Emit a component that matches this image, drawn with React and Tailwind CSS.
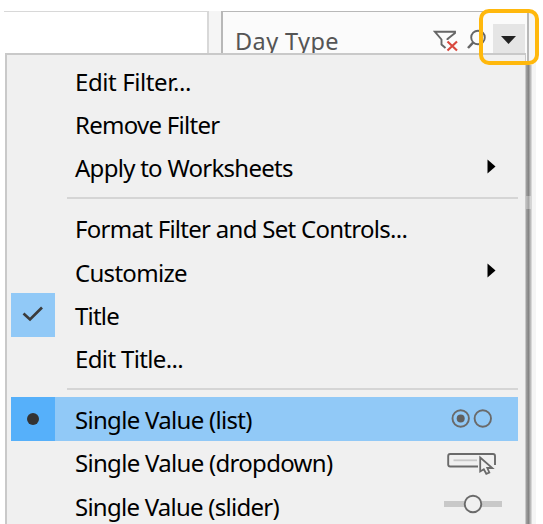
import React from "react";

function Arrow() {
  return (
    <svg width="9" height="15" viewBox="0 0 9 15" className="mr-[22px] -mt-[2px]">
      <path d="M.5 .5 8.5 7.5 .5 14.5Z" fill="#000" />
    </svg>
  );
}

function Check() {
  return (
    <svg width="22" height="16" viewBox="0 0 22 16" className="-mt-0.5" fill="none">
      <path d="M1.5 7.5 8 13.5 20 1.5" stroke="#3b3b3b" strokeWidth="2.7" />
    </svg>
  );
}

function RadioIcon() {
  return (
    <svg width="42" height="19" viewBox="0 0 42 19" className="-mt-0.5 mr-[25px]" fill="none" stroke="#6a6a6a" strokeWidth="1.9">
      <circle cx="9.7" cy="9.5" r="8.2" />
      <circle cx="9.7" cy="9.5" r="4" fill="#606060" stroke="none" />
      <circle cx="31.8" cy="9.5" r="8.2" />
    </svg>
  );
}

function DropdownIcon() {
  return (
    <svg width="50" height="24" viewBox="0 0 50 24" className="mr-[21px] mt-1" fill="none" stroke="#6a6a6a" strokeWidth="1.9">
      <path d="M31 14.5H3.2Q1.2 14.5 1.2 12.5V4Q1.2 2 3.2 2H46Q48 2 48 4V13" />
      <path d="M6.5 8.3H30" stroke="#c8c8c8" strokeWidth="1.8" />
      <path d="M33.2 5.5V19.5L36.8 17.3 39.3 21.8 42.3 20.5 40.3 16H45.3Z" strokeWidth="1.8" />
    </svg>
  );
}

function SliderIcon() {
  return (
    <svg width="58" height="20" viewBox="0 0 58 20" className="mr-4 -mt-[3px]">
      <path d="M0 10H58" stroke="#c8c8c8" strokeWidth="6" />
      <circle cx="29" cy="10" r="8.3" fill="#f0f0f0" stroke="#6a6a6a" strokeWidth="1.9" />
    </svg>
  );
}

function Item({ label, mark, icon, active, tracking }) {
  return (
    <div className={`flex h-[43.35px] shrink-0 items-center ${active ? "bg-[#91c9f7]" : ""}`}>
      <div
        className={`flex h-full w-11 shrink-0 items-center justify-center ${
          active ? "bg-[#56b0fa]" : mark ? "bg-[#91c9f7]" : ""
        }`}
      >
        {mark}
      </div>
      <span className={`ml-5 flex-1 whitespace-nowrap pt-px leading-[43px] ${tracking}`}>{label}</span>
      {icon}
    </div>
  );
}

function Separator() {
  return (
    <div className="flex h-[17.5px] shrink-0 items-center pl-14">
      <div className="h-0.5 w-full bg-[#d5d5d5]" />
    </div>
  );
}

function Header() {
  return (
    <div className="mt-[11px] flex h-[513px] w-[532px] bg-[#f5f5f5]">
      <div className="h-full w-[205px] border-t border-r-2 border-[#d8d8d8] bg-white" />
      <div className="ml-3 h-full w-[308px] border-2 border-t-[1.5px] border-[#b8b8b8] bg-[#fbfbfb]">
        <div className="flex h-[43px] items-center">
          <span className="ml-3 mt-4 flex-1 whitespace-nowrap text-[23.5px] tracking-[0.4px] text-[#555]">Day Type</span>
          <svg width="25" height="22" viewBox="0 0 25 22" className="mt-3.5" fill="none">
            <path d="M12.5 18 8.5 14.5V9.5L2 1.8H22V3L14.5 9V10" stroke="#666" strokeWidth="1.9" />
            <path d="M14.5 11.5 24 20.5M24 11.5 14.5 20.5" stroke="#d9483d" strokeWidth="2.2" />
          </svg>
          <svg width="20" height="21" viewBox="0 0 20 21" className="ml-2 mt-3" fill="none" stroke="#666" strokeWidth="1.9">
            <circle cx="12" cy="8.5" r="6.8" />
            <path d="M7.3 13.3 2 19" strokeWidth="2.5" />
          </svg>
          <div className="ml-[7px] mr-0.5 mt-3 flex h-[31px] w-8 items-center justify-center bg-[#e5e5e5]">
            <svg width="15" height="8" viewBox="0 0 15 8" className="mr-0.5">
              <path d="M0 0H15L7.5 8Z" fill="#222" />
            </svg>
          </div>
        </div>
      </div>
    </div>
  );
}

export default function App() {
  return (
    <div className="relative h-[524px] w-[543px] overflow-hidden bg-white pl-1 font-['Noto_Sans',sans-serif] text-[24px] text-black">
      <Header />
      <div className="absolute top-[65px] left-[525px] h-[459px] w-[7px] bg-linear-to-r from-[#b0b0b0] via-[#858585] to-[#e5e5e5]" />
      <div className="absolute top-[196px] left-[526px] h-[13px] w-[5px] bg-linear-to-r from-[#c0c0c0] via-[#a8a8a8] to-[#e0e0e0]" />
      <div className="absolute top-[53px] left-[5px] flex h-[480px] w-[521px] flex-col border-2 border-r-[1.5px] border-[#c9c9c9] bg-[#f0f0f0] pt-[4px] pr-[7px] pl-1">
        <Item label="Edit Filter..." tracking="tracking-[-0.4px]" />
        <Item label="Remove Filter" tracking="tracking-[-0.73px]" />
        <Item label="Apply to Worksheets" tracking="tracking-[-0.73px]" icon={<Arrow />} />
        <Separator />
        <Item label="Format Filter and Set Controls..." tracking="tracking-[-0.72px]" />
        <Item label="Customize" tracking="tracking-[-0.7px]" icon={<Arrow />} />
        <Item label="Title" tracking="tracking-[-0.8px]" mark={<Check />} />
        <Item label="Edit Title..." tracking="tracking-[-0.64px]" />
        <Separator />
        <Item
          label="Single Value (list)"
          tracking="tracking-[-0.7px]"
          active
          mark={<div className="size-3 rounded-full bg-[#333]" />}
          icon={<RadioIcon />}
        />
        <Item label="Single Value (dropdown)" tracking="tracking-[-0.7px]" icon={<DropdownIcon />} />
        <Item label="Single Value (slider)" tracking="tracking-[-0.75px]" icon={<SliderIcon />} />
      </div>
      <div className="absolute top-[9px] left-[479px] h-[56px] w-[60px] rounded-[10px] border-4 border-[#ffb80c]" />
    </div>
  );
}
